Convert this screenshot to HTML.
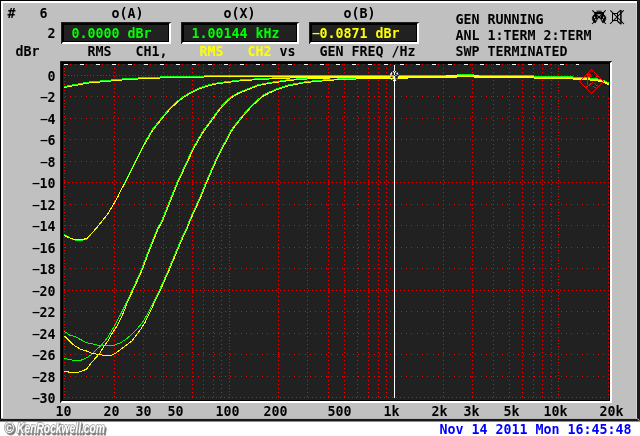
<!DOCTYPE html>
<html lang="en"><head><meta charset="utf-8"><title>Audio analyzer sweep</title>
<style>html,body{margin:0;padding:0;background:#fff;overflow:hidden}svg{display:block;will-change:transform}text{white-space:pre}</style></head>
<body><svg width="640" height="436" viewBox="0 0 640 436" font-family='"DejaVu Sans Mono","Liberation Mono",monospace' font-size="13.3"><defs><clipPath id="pc"><rect x="63" y="64" width="546" height="336"/></clipPath><filter id="bl" x="-5%" y="-30%" width="110%" height="160%"><feGaussianBlur stdDeviation="0.7"/></filter></defs><rect x="0" y="0" width="640" height="421.5" fill="#1a1a1a"/>
<rect x="0" y="0" width="637" height="1" fill="#000"/>
<rect x="0" y="0" width="1" height="419" fill="#000"/>
<rect x="1" y="1" width="636" height="417.6" fill="#fff"/>
<rect x="3" y="3" width="633.7" height="415.6" fill="#c0c0c0"/>
<path d="M61 44L63 42H169V24L171 22V44z" fill="#fff"/>
<path d="M61 22H171L169 24V42H63L61 44z" fill="#000"/>
<path d="M61 22H171L170 23H62V43L61 44z" fill="#1e1e1e"/>
<rect x="64" y="25" width="104" height="16" fill="#212121"/>
<path d="M181 44L183 42H297V24L299 22V44z" fill="#fff"/>
<path d="M181 22H299L297 24V42H183L181 44z" fill="#000"/>
<path d="M181 22H299L298 23H182V43L181 44z" fill="#1e1e1e"/>
<rect x="184" y="25" width="112" height="16" fill="#212121"/>
<path d="M309 44L311 42H417V24L419 22V44z" fill="#fff"/>
<path d="M309 22H419L417 24V42H311L309 44z" fill="#000"/>
<path d="M309 22H419L418 23H310V43L309 44z" fill="#1e1e1e"/>
<rect x="312" y="25" width="104" height="16" fill="#212121"/>
<path d="M60 403L62 401H610V63L612 61V403z" fill="#fff"/>
<path d="M60 61H612L610 63V401H62L60 403z" fill="#000"/>
<path d="M60 61H612L611 62H61V402L60 403z" fill="#1e1e1e"/>
<rect x="63" y="64" width="546" height="336" fill="#212121"/>
<text x="7.6 15.6 23.6 31.6 39.6" y="18" fill="#000" font-weight="bold" xml:space="preserve">#   6</text>
<text x="111.6 119.6 127.6 135.6" y="18" fill="#000" font-weight="bold" xml:space="preserve">o(A)</text>
<text x="223.6 231.6 239.6 247.6" y="18" fill="#000" font-weight="bold" xml:space="preserve">o(X)</text>
<text x="343.6 351.6 359.6 367.6" y="18" fill="#000" font-weight="bold" xml:space="preserve">o(B)</text>
<text x="47.6" y="38" fill="#000" font-weight="bold" xml:space="preserve">2</text>
<text x="71.6 79.6 87.6 95.6 103.6 111.6 119.6 127.6 135.6 143.6" y="38" fill="#00ff00" font-weight="bold" xml:space="preserve">0.0000 dBr</text>
<text x="191.6 199.6 207.6 215.6 223.6 231.6 239.6 247.6 255.6 263.6 271.6" y="38" fill="#00ff00" font-weight="bold" xml:space="preserve">1.00144 kHz</text>
<text transform="translate(316 36.25) scale(1.7 0.68)" x="0" y="0" text-anchor="middle" fill="#ffff00" font-weight="bold">-</text>
<text x="319.6 327.6 335.6 343.6 351.6 359.6 367.6 375.6 383.6 391.6" y="38" fill="#ffff00" font-weight="bold" xml:space="preserve">0.0871 dBr</text>
<text x="15.6 23.6 31.6" y="56" fill="#000" font-weight="bold" xml:space="preserve">dBr</text>
<text x="87.6 95.6 103.6" y="56" fill="#000" font-weight="bold" xml:space="preserve">RMS</text>
<text x="135.6 143.6 151.6 159.6" y="56" fill="#000" font-weight="bold" xml:space="preserve">CH1,</text>
<text x="199.6 207.6 215.6" y="56" fill="#ffff00" font-weight="bold" xml:space="preserve">RMS</text>
<text x="247.6 255.6 263.6" y="56" fill="#ffff00" font-weight="bold" xml:space="preserve">CH2</text>
<text x="279.6 287.6" y="56" fill="#000" font-weight="bold" xml:space="preserve">vs</text>
<text x="319.6 327.6 335.6 343.6 351.6 359.6 367.6 375.6 383.6 391.6 399.6 407.6" y="56" fill="#000" font-weight="bold" xml:space="preserve">GEN FREQ /Hz</text>
<text x="455.6 463.6 471.6 479.6 487.6 495.6 503.6 511.6 519.6 527.6 535.6" y="24" fill="#000" font-weight="bold" xml:space="preserve">GEN RUNNING</text>
<text x="455.6 463.6 471.6 479.6 487.6 495.6 503.6 511.6 519.6 527.6 535.6 543.6 551.6 559.6 567.6 575.6 583.6" y="40" fill="#000" font-weight="bold" xml:space="preserve">ANL 1:TERM 2:TERM</text>
<text x="455.6 463.6 471.6 479.6 487.6 495.6 503.6 511.6 519.6 527.6 535.6 543.6 551.6 559.6" y="56" fill="#000" font-weight="bold" xml:space="preserve">SWP TERMINATED</text>
<g stroke="#ff0000" stroke-width="1" fill="none" shape-rendering="crispEdges"><path d="M65 64.5H609" stroke-dasharray="1 4 1 4 1 5"/><path d="M65 75.5H609" stroke-dasharray="1 2 1 2 1 2 1 2 1 3"/><path d="M65 96.5H609" stroke-dasharray="1 4 1 4 1 5"/><path d="M65 118.5H609" stroke-dasharray="1 4 1 4 1 5"/><path d="M65 139.5H609" stroke-dasharray="1 4 1 4 1 5"/><path d="M65 161.5H609" stroke-dasharray="1 4 1 4 1 5"/><path d="M64 182.5H609" stroke-dasharray="1 3"/><path d="M65 204.5H609" stroke-dasharray="1 4 1 4 1 5"/><path d="M65 225.5H609" stroke-dasharray="1 4 1 4 1 5"/><path d="M65 247.5H609" stroke-dasharray="1 4 1 4 1 5"/><path d="M65 268.5H609" stroke-dasharray="1 4 1 4 1 5"/><path d="M64 290.5H609" stroke-dasharray="1 3"/><path d="M65 311.5H609" stroke-dasharray="1 4 1 4 1 5"/><path d="M65 333.5H609" stroke-dasharray="1 4 1 4 1 5"/><path d="M65 354.5H609" stroke-dasharray="1 4 1 4 1 5"/><path d="M65 376.5H609" stroke-dasharray="1 4 1 4 1 5"/><path d="M64 397.5H609" stroke-dasharray="1 3"/><path d="M64.5 65V398" stroke-dasharray="1 2 1 2 1 2 1 2 1 3"/><path d="M114.5 64V398" stroke-dasharray="1 3"/><path d="M143.5 64V398" stroke-dasharray="1 3"/><path d="M163.5 64V398" stroke-dasharray="1 3"/><path d="M179.5 64V398" stroke-dasharray="1 3"/><path d="M192.5 64V398" stroke-dasharray="1 3"/><path d="M203.5 64V398" stroke-dasharray="1 3"/><path d="M213.5 64V398" stroke-dasharray="1 3"/><path d="M221.5 64V398" stroke-dasharray="1 3"/><path d="M229.5 65V398" stroke-dasharray="1 2 1 2 1 2 1 2 1 3"/><path d="M278.5 64V398" stroke-dasharray="1 3"/><path d="M307.5 64V398" stroke-dasharray="1 3"/><path d="M328.5 64V398" stroke-dasharray="1 3"/><path d="M344.5 64V398" stroke-dasharray="1 3"/><path d="M357.5 64V398" stroke-dasharray="1 3"/><path d="M368.5 64V398" stroke-dasharray="1 3"/><path d="M378.5 64V398" stroke-dasharray="1 3"/><path d="M386.5 64V398" stroke-dasharray="1 3"/><path d="M394.5 65V398" stroke-dasharray="1 2 1 2 1 2 1 2 1 3"/><path d="M443.5 64V398" stroke-dasharray="1 3"/><path d="M472.5 64V398" stroke-dasharray="1 3"/><path d="M493.5 64V398" stroke-dasharray="1 3"/><path d="M509.5 64V398" stroke-dasharray="1 3"/><path d="M522.5 64V398" stroke-dasharray="1 3"/><path d="M533.5 64V398" stroke-dasharray="1 3"/><path d="M542.5 64V398" stroke-dasharray="1 3"/><path d="M551.5 64V398" stroke-dasharray="1 3"/><path d="M558.5 65V398" stroke-dasharray="1 2 1 2 1 2 1 2 1 3"/><path d="M608.5 66V398" stroke-dasharray="1 3"/></g>
<path d="M64 64.5H580" stroke="#fff" stroke-width="1" stroke-dasharray="4 12" shape-rendering="crispEdges"/>
<rect x="579" y="64" width="30" height="32" fill="#212121"/>
<g clip-path="url(#pc)" shape-rendering="crispEdges">
<path d="M64 86h3v1h-3zM67 85h5v1h-5zM72 84h6v1h-6zM78 83h5v1h-5zM83 82h6v1h-6zM89 81h11v1h-11zM100 80h11v1h-11zM111 79h11v1h-11zM122 78h16v1h-16zM138 77h22v1h-22zM160 76h44v1h-44zM204 75h253v1h-253zM457 74h17v1h-17zM474 75h60v1h-60zM534 76h39v1h-39zM573 77h17v1h-17zM590 78h8v1h-8zM598 79h4v1h-4zM602 80h3v1h-3zM605 81h2v1h-2zM607 82h2v1h-2z" fill="#00ff00"/>
<path d="M64.50 234.50 L68.30 236.90 L73.80 239.90 L80.70 240.50 L86.90 238.90 L91.70 233.40" fill="none" stroke="#00ff00" stroke-width="1.0" stroke-linejoin="round"/>
<path d="M64.50 235.40 L68.30 237.50 L73.80 239.30 L80.70 239.80 L86.90 238.50 L91.70 233.40 L97.20 227.20 L102.70 220.30 L108.20 213.40 L112.99 205.09 L117.74 196.87 L120.51 190.65 L124.86 182.43 L134.76 162.38 L143.42 144.82 L152.13 129.75 L162.15 117.22 L169.67 108.19 L177.21 101.16 L182.75 96.93 L186.01 95.12 L189.77 92.51 L194.81 89.99 L199.84 87.83 L204.86 86.17 L209.88 84.57 L214.91 83.31 L219.94 82.45 L228.44 81.55 L234.45 80.55 L245.47 79.55 L261.97 78.55 L280.98 77.55 L299.99 76.75 L330.00 76.55" fill="none" stroke="#00ff00" stroke-width="1.0" stroke-linejoin="round"/>
<path d="M125.84 303.81 L134.59 284.81 L141.28 269.83 L148.33 251.09 L156.79 229.82 L162.09 219.81 L167.08 207.33 L172.08 194.83 L177.09 182.32 L184.59 166.06 L193.35 147.29 L202.12 132.25 L212.14 118.48 L219.65 108.21 L227.19 100.17 L233.75 95.03 L238.56 92.49 L244.83 89.98 L251.08 87.48 L257.37 84.97 L263.66 83.66 L269.93 82.46 L276.18 81.56 L282.44 80.55 L289.95 79.55 L299.96 78.65 L314.98 77.55 L344.99 76.75 L359.99 76.55" fill="none" stroke="#00ff00" stroke-width="1.0" stroke-linejoin="round"/>
<path d="M64.50 358.50 L69.60 359.50 L75.10 360.60 L80.70 360.30 L86.20 358.10 L91.70 354.40 L95.80 350.20 L101.30 345.40 L106.80 338.50 L110.90 332.30 L114.40 326.10 L116.50 322.00 L120.00 315.50 L126.00 303.50" fill="none" stroke="#00ff00" stroke-width="1.0" stroke-linejoin="round"/>
<path d="M152.60 303.80 L159.59 289.81 L168.39 269.82 L174.59 254.83 L182.09 237.32 L185.79 229.82 L189.59 219.82 L195.84 206.07 L200.84 194.83 L205.84 182.32 L214.59 162.31 L223.35 144.79 L232.12 128.50 L242.15 115.96 L250.92 105.94 L256.70 100.66 L262.85 95.38 L269.81 91.84 L276.09 89.08 L282.36 87.07 L288.63 84.97 L294.92 83.66 L299.92 82.81 L304.94 81.85 L311.96 81.05 L319.96 80.35 L327.96 79.55 L335.98 79.05 L346.98 78.55 L357.99 78.05 L379.99 77.55" fill="none" stroke="#00ff00" stroke-width="1.0" stroke-linejoin="round"/>
<path d="M64.50 331.40 L69.60 335.10 L75.10 336.50 L80.70 339.60 L86.20 342.70 L93.00 344.00 L100.00 345.70 L106.80 345.70 L114.40 345.10 L120.60 342.70 L126.10 339.20 L131.60 334.40 L137.10 328.90 L140.00 325.40 L142.50 322.50 L148.00 313.00 L152.70 303.50" fill="none" stroke="#00ff00" stroke-width="1.0" stroke-linejoin="round"/>
<path d="M64.50 235.40 L68.30 237.50 L73.80 239.30 L80.70 239.80 L86.90 238.50 L91.70 233.40 L97.20 227.20 L102.70 220.30 L108.20 213.40 L113.01 205.11 L117.85 196.93 L120.68 190.74 L125.12 182.56 L135.22 162.61 L144.04 145.16 L152.83 130.23 L162.81 117.75 L170.29 108.77 L177.76 101.80 L183.23 97.63 L186.46 95.84 L190.20 93.25 L195.17 90.76 L200.14 88.62 L205.12 86.98 L210.11 85.38 L215.08 84.14 L220.05 83.30 L228.55 82.40 L234.55 81.40 L245.53 80.40 L262.02 79.40 L281.02 78.40 L300.01 77.60 L330.00 77.40" fill="none" stroke="#ffff00" stroke-width="1.0" stroke-linejoin="round"/>
<path d="M126.61 304.17 L135.36 285.17 L142.07 270.15 L149.12 251.39 L157.57 230.16 L162.86 220.17 L167.87 207.65 L172.87 195.15 L177.87 182.66 L185.36 166.42 L194.11 147.68 L202.84 132.72 L212.82 118.99 L220.31 108.75 L227.77 100.79 L234.22 95.73 L238.92 93.26 L245.15 90.77 L251.40 88.27 L257.62 85.78 L263.83 84.49 L270.07 83.29 L276.31 82.40 L282.56 81.40 L290.04 80.40 L300.03 79.50 L315.02 78.40 L345.01 77.60 L360.01 77.40" fill="none" stroke="#ffff00" stroke-width="1.0" stroke-linejoin="round"/>
<path d="M64.50 371.20 L71.00 372.50 L77.90 372.30 L83.40 370.50 L86.90 368.80 L90.30 364.00 L95.80 357.80 L99.90 353.00 L104.10 346.10 L108.20 340.60 L112.30 333.00 L116.50 326.80 L119.20 322.00 L122.00 316.00 L126.80 304.50" fill="none" stroke="#ffff00" stroke-width="1.0" stroke-linejoin="round"/>
<path d="M153.36 304.18 L160.36 290.17 L169.17 270.16 L175.37 255.16 L182.87 237.66 L186.57 230.16 L190.37 220.16 L196.61 206.41 L201.62 195.16 L206.62 182.66 L215.36 162.67 L224.11 145.18 L232.84 128.97 L242.81 116.51 L251.54 106.53 L257.27 101.30 L263.32 96.08 L270.17 92.61 L276.39 89.87 L282.62 87.88 L288.85 85.79 L295.08 84.49 L300.07 83.64 L305.06 82.70 L312.04 81.90 L320.04 81.20 L328.03 80.40 L336.02 79.90 L347.02 79.40 L358.01 78.90 L380.01 78.40" fill="none" stroke="#ffff00" stroke-width="1.0" stroke-linejoin="round"/>
<path d="M64.50 336.20 L69.60 341.30 L75.10 346.10 L80.70 349.30 L86.20 350.90 L91.70 353.40 L98.60 354.40 L105.40 355.50 L110.30 355.50 L114.40 354.00 L120.60 349.50 L126.10 345.40 L131.60 341.30 L135.70 335.80 L140.00 330.30 L145.00 322.50 L150.00 312.00 L153.50 304.50" fill="none" stroke="#ffff00" stroke-width="1.0" stroke-linejoin="round"/>
<path d="M64 87h3v1h-3zM67 86h5v1h-5zM72 85h6v1h-6zM78 84h5v1h-5zM83 83h6v1h-6zM89 82h11v1h-11zM100 81h11v1h-11zM111 80h11v1h-11zM122 79h16v1h-16zM138 78h22v1h-22zM160 77h44v1h-44zM204 76h88v1h-88zM292 76h66v2h-66zM358 76h50v3h-50zM408 76h38v2h-38zM446 75h11v3h-11zM457 75h17v2h-17zM474 75h5v3h-5zM479 76h55v2h-55zM534 77h39v2h-39zM573 78h17v2h-17zM590 79h8v2h-8zM598 80h4v2h-4zM602 81h3v2h-3zM605 82h2v2h-2zM607 83h2v2h-2z" fill="#ffff00"/>
</g>
<g stroke="#ff0000" stroke-width="1" fill="none" shape-rendering="crispEdges"><path d="M591.5 69.5L603.5 81.5L591.5 93.5L579.5 81.5z"/><path d="M587.5 73V85M586 74.5H591M588 76.5H592M586.5 87.5L593.5 81.5M586.5 86V89M594.5 83.5L597.5 86M593 86.5L596 88M595 77.5L598 76.5"/></g>
<rect x="394" y="65" width="1" height="333" fill="#fff"/>
<ellipse cx="394.3" cy="76" rx="3.6" ry="4.5" fill="none" stroke="#fff" stroke-width="1.4" stroke-dasharray="3.2 1.1"/>
<rect x="395.2" y="76" width="2.6" height="2.6" fill="#1a1a1a"/>
<rect x="390.6" y="76.6" width="2" height="1.4" fill="#1a1a1a"/>
<rect x="394" y="70" width="1" height="12" fill="#fff"/>
<rect x="397" y="74.6" width="1.8" height="1.6" fill="#0000d0"/>
<rect x="394" y="71" width="1" height="1" fill="#f00"/>
<rect x="394" y="75" width="1" height="1" fill="#2040c0"/>
<text x="47.6" y="81" fill="#000" font-weight="bold" xml:space="preserve">0</text>
<text transform="translate(44 100.25) scale(1.7 0.68)" x="0" y="0" text-anchor="middle" fill="#000" font-weight="bold">-</text>
<text x="47.6" y="102" fill="#000" font-weight="bold" xml:space="preserve">2</text>
<text transform="translate(44 122.25) scale(1.7 0.68)" x="0" y="0" text-anchor="middle" fill="#000" font-weight="bold">-</text>
<text x="47.6" y="124" fill="#000" font-weight="bold" xml:space="preserve">4</text>
<text transform="translate(44 143.25) scale(1.7 0.68)" x="0" y="0" text-anchor="middle" fill="#000" font-weight="bold">-</text>
<text x="47.6" y="145" fill="#000" font-weight="bold" xml:space="preserve">6</text>
<text transform="translate(44 165.25) scale(1.7 0.68)" x="0" y="0" text-anchor="middle" fill="#000" font-weight="bold">-</text>
<text x="47.6" y="167" fill="#000" font-weight="bold" xml:space="preserve">8</text>
<text transform="translate(36 186.25) scale(1.7 0.68)" x="0" y="0" text-anchor="middle" fill="#000" font-weight="bold">-</text>
<text x="39.6 47.6" y="188" fill="#000" font-weight="bold" xml:space="preserve">10</text>
<text transform="translate(36 208.25) scale(1.7 0.68)" x="0" y="0" text-anchor="middle" fill="#000" font-weight="bold">-</text>
<text x="39.6 47.6" y="210" fill="#000" font-weight="bold" xml:space="preserve">12</text>
<text transform="translate(36 229.25) scale(1.7 0.68)" x="0" y="0" text-anchor="middle" fill="#000" font-weight="bold">-</text>
<text x="39.6 47.6" y="231" fill="#000" font-weight="bold" xml:space="preserve">14</text>
<text transform="translate(36 251.25) scale(1.7 0.68)" x="0" y="0" text-anchor="middle" fill="#000" font-weight="bold">-</text>
<text x="39.6 47.6" y="253" fill="#000" font-weight="bold" xml:space="preserve">16</text>
<text transform="translate(36 272.25) scale(1.7 0.68)" x="0" y="0" text-anchor="middle" fill="#000" font-weight="bold">-</text>
<text x="39.6 47.6" y="274" fill="#000" font-weight="bold" xml:space="preserve">18</text>
<text transform="translate(36 294.25) scale(1.7 0.68)" x="0" y="0" text-anchor="middle" fill="#000" font-weight="bold">-</text>
<text x="39.6 47.6" y="296" fill="#000" font-weight="bold" xml:space="preserve">20</text>
<text transform="translate(36 315.25) scale(1.7 0.68)" x="0" y="0" text-anchor="middle" fill="#000" font-weight="bold">-</text>
<text x="39.6 47.6" y="317" fill="#000" font-weight="bold" xml:space="preserve">22</text>
<text transform="translate(36 337.25) scale(1.7 0.68)" x="0" y="0" text-anchor="middle" fill="#000" font-weight="bold">-</text>
<text x="39.6 47.6" y="339" fill="#000" font-weight="bold" xml:space="preserve">24</text>
<text transform="translate(36 358.25) scale(1.7 0.68)" x="0" y="0" text-anchor="middle" fill="#000" font-weight="bold">-</text>
<text x="39.6 47.6" y="360" fill="#000" font-weight="bold" xml:space="preserve">26</text>
<text transform="translate(36 380.25) scale(1.7 0.68)" x="0" y="0" text-anchor="middle" fill="#000" font-weight="bold">-</text>
<text x="39.6 47.6" y="382" fill="#000" font-weight="bold" xml:space="preserve">28</text>
<text transform="translate(36 401.25) scale(1.7 0.68)" x="0" y="0" text-anchor="middle" fill="#000" font-weight="bold">-</text>
<text x="39.6 47.6" y="403" fill="#000" font-weight="bold" xml:space="preserve">30</text>
<text x="55.6 63.6" y="416" fill="#000" font-weight="bold" xml:space="preserve">10</text>
<text x="103.6 111.6" y="416" fill="#000" font-weight="bold" xml:space="preserve">20</text>
<text x="135.6 143.6" y="416" fill="#000" font-weight="bold" xml:space="preserve">30</text>
<text x="167.6 175.6" y="416" fill="#000" font-weight="bold" xml:space="preserve">50</text>
<text x="215.6 223.6 231.6" y="416" fill="#000" font-weight="bold" xml:space="preserve">100</text>
<text x="263.6 271.6 279.6" y="416" fill="#000" font-weight="bold" xml:space="preserve">200</text>
<text x="327.6 335.6 343.6" y="416" fill="#000" font-weight="bold" xml:space="preserve">500</text>
<text x="383.6 391.6" y="416" fill="#000" font-weight="bold" xml:space="preserve">1k</text>
<text x="431.6 439.6" y="416" fill="#000" font-weight="bold" xml:space="preserve">2k</text>
<text x="463.6 471.6" y="416" fill="#000" font-weight="bold" xml:space="preserve">3k</text>
<text x="503.6 511.6" y="416" fill="#000" font-weight="bold" xml:space="preserve">5k</text>
<text x="543.6 551.6 559.6" y="416" fill="#000" font-weight="bold" xml:space="preserve">10k</text>
<text x="599.6 607.6 615.6" y="416" fill="#000" font-weight="bold" xml:space="preserve">20k</text>
<g stroke="#000" stroke-width="1" fill="none"><path d="M592.3 10.3L606 24M605.7 10.3L592 24" stroke-width="1.05"/><path d="M595.4 16V13.1H602.9V16" stroke-width="2.2" stroke-linejoin="miter"/><path d="M596.5 11.2H601.7" stroke-width="1"/><path d="M595 14.6C592.6 15.2 591.9 17.5 592.5 19.5C593 21.3 594.3 22.3 595.3 23C596.4 21.6 597.5 19.5 597.4 17.5C597.3 16 596.4 14.8 595 14.6z" fill="#000" stroke-width="0.6"/><path d="M603.2 14.6C605.6 15.2 606.3 17.5 605.7 19.5C605.2 21.3 603.9 22.3 602.9 23C601.8 21.6 600.7 19.5 600.8 17.5C600.9 16 601.8 14.8 603.2 14.6z" fill="#000" stroke-width="0.6"/><path d="M594.3 16.6L594.9 18.2M595.6 19L596 20.4M603.9 16.6L603.3 18.2M602.6 19L602.2 20.4" stroke="#c0c0c0" stroke-width="1.1"/><rect x="598.3" y="16.3" width="1.9" height="1.9" fill="#000" stroke="none"/><path d="M610.3 10.3L624 24M623.7 10.3L610 24" stroke-width="1.05"/><rect x="612.6" y="13.4" width="4.6" height="7.4" stroke-width="1.2" shape-rendering="crispEdges"/><path d="M617.3 13.2L620.8 10.2M617.3 21L620.8 24" stroke-width="1.1"/><path d="M620.9 10V24.2" stroke-width="1.5"/></g>
<text x="439.6 447.6 455.6 463.6 471.6 479.6 487.6 495.6 503.6 511.6 519.6 527.6 535.6 543.6 551.6 559.6 567.6 575.6 583.6 591.6 599.6 607.6 615.6 623.6" y="434" fill="#0000ff" font-weight="bold" xml:space="preserve">Nov 14 2011 Mon 16:45:48</text>
<g font-family="'Liberation Sans',sans-serif" font-style="italic" font-weight="bold" font-size="14"><text y="434.9" fill="#555" stroke="#555" stroke-width="1" opacity="0.75" filter="url(#bl)" xml:space="preserve"><tspan x="5.8" textLength="13.2" lengthAdjust="spacingAndGlyphs">© </tspan><tspan x="18.6" textLength="88" lengthAdjust="spacingAndGlyphs">KenRockwell.com</tspan></text><text y="433.4" fill="#999" stroke="#999" stroke-width="1.5" stroke-linejoin="round" xml:space="preserve"><tspan x="4.2" textLength="13.2" lengthAdjust="spacingAndGlyphs">© </tspan><tspan x="17.0" textLength="88" lengthAdjust="spacingAndGlyphs">KenRockwell.com</tspan></text><text y="433.4" fill="#fff" xml:space="preserve"><tspan x="4.2" textLength="13.2" lengthAdjust="spacingAndGlyphs">© </tspan><tspan x="17.0" textLength="88" lengthAdjust="spacingAndGlyphs">KenRockwell.com</tspan></text></g>
<path d="M637.2 418.4L639.3 420.6" stroke="#fff" stroke-width="0.9"/></svg></body></html>
